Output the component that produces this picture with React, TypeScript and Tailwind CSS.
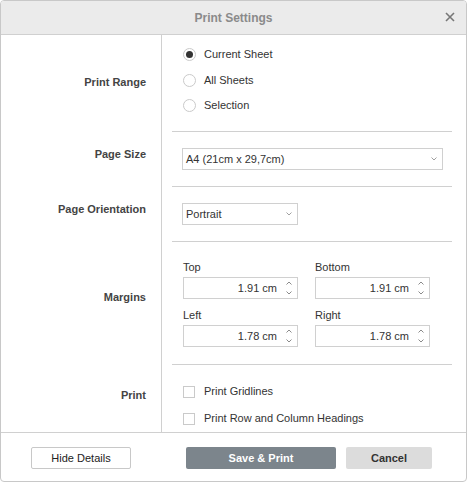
import type { ReactNode } from 'react'

const font = { fontFamily: '"Liberation Sans", Arial, sans-serif' }

function Chevron({ up = false, color = '#8a8a8a' }: { up?: boolean; color?: string }) {
  return (
    <svg width="6" height="4" viewBox="0 0 6 4" className="block">
      <polyline
        points={up ? '0.5,3.5 3,1 5.5,3.5' : '0.5,0.5 3,3 5.5,0.5'}
        fill="none"
        stroke={color}
        strokeWidth="1"
      />
    </svg>
  )
}

function Radio({ checked, label, tall }: { checked?: boolean; label: string; tall?: boolean }) {
  return (
    <div className={`flex ${tall ? 'h-[26px]' : 'h-[25px]'} items-center`}>
      <span className="ml-px flex h-[13px] w-[13px] items-center justify-center rounded-full border border-[#cacaca] bg-white">
        {checked && <span className="h-[7px] w-[7px] rounded-full bg-[#333]" />}
      </span>
      <span className="ml-[8px] text-[11px] text-[#333]">{label}</span>
    </div>
  )
}

function Checkbox({ label }: { label: string }) {
  return (
    <div className="flex h-[27px] items-center">
      <span className="ml-px h-[12px] w-[12px] border border-[#cacaca] bg-white" />
      <span className="ml-[9px] text-[11px] text-[#333]">{label}</span>
    </div>
  )
}

function Select({ value, width }: { value: string; width: string }) {
  return (
    <div className={`flex h-[22px] ${width} items-center justify-between border border-[#d0d0d0] bg-white pl-[3px] pr-[5px] text-[11px] text-[#333]`}>
      <span>{value}</span>
      <Chevron color="#a0a0a0" />
    </div>
  )
}

function NumberField({ label, value }: { label: string; value: string }) {
  return (
    <div className="flex flex-col">
      <span className="h-[14px] text-[11px] leading-[14px] text-[#333]">{label}</span>
      <div className="mt-[3px] flex h-[22px] w-[115px] items-center border border-[#d0d0d0] bg-white">
        <span className="flex-1 text-right text-[11px] text-[#333]">{value}</span>
        <span className="ml-[9px] mr-[5px] flex flex-col gap-[6px]">
          <Chevron up />
          <Chevron />
        </span>
      </div>
    </div>
  )
}

function Row({ label, labelPad, last, children }: { label: string; labelPad: string; last?: boolean; children: ReactNode }) {
  return (
    <div className={`flex ${last ? 'flex-1' : ''}`}>
      <div className={`flex w-[161px] shrink-0 items-center justify-end border-r border-[#d0d0d0] pr-[15px] ${labelPad}`}>
        <span className="text-[11px] font-bold text-[#444]">{label}</span>
      </div>
      <div className={`ml-[10px] mr-[14px] flex-1 ${last ? '' : 'border-b border-[#d0d0d0]'}`}>{children}</div>
    </div>
  )
}

export default function App() {
  return (
    <div className="h-[482px] w-[468px] bg-white" style={font}>
      <div className="flex h-[482px] w-[467px] flex-col overflow-hidden rounded-[4px] border border-[#c8c8c8] bg-white">
        <div className="relative flex h-[34px] shrink-0 items-center justify-center border-b border-[#d0d0d0] bg-[#ebebeb]">
          <span className="text-[12px] font-bold text-[#8a8a8a]">Print Settings</span>
          <svg width="10" height="10" viewBox="0 0 10 10" className="absolute right-[11px] top-[11px]">
            <path d="M1 1L9 9M9 1L1 9" stroke="#777" strokeWidth="1.6" />
          </svg>
        </div>

        <div className="flex min-h-0 flex-1 flex-col">
          <Row label="Print Range" labelPad="pb-[2px]">
            <div className="flex flex-col pb-[13px] pl-[10px] pt-[7px]">
              <Radio checked label="Current Sheet" />
              <Radio tall label="All Sheets" />
              <Radio label="Selection" />
            </div>
          </Row>

          <Row label="Page Size" labelPad="pb-[10px]">
            <div className="py-4 pl-[10px]">
              <Select value="A4 (21cm x 29,7cm)" width="w-[261px]" />
            </div>
          </Row>

          <Row label="Page Orientation" labelPad="pb-[10px]">
            <div className="py-4 pl-[10px]">
              <Select value="Portrait" width="w-[116px]" />
            </div>
          </Row>

          <Row label="Margins" labelPad="pb-[12px]">
            <div className="grid grid-cols-[115px_115px] gap-x-[17px] gap-y-[9px] pb-[17px] pl-[11px] pt-[18px]">
              <NumberField label="Top" value="1.91 cm" />
              <NumberField label="Bottom" value="1.91 cm" />
              <NumberField label="Left" value="1.78 cm" />
              <NumberField label="Right" value="1.78 cm" />
            </div>
          </Row>

          <Row label="Print" labelPad="pb-[7px]" last>
            <div className="flex flex-col pl-[10px] pt-[13px]">
              <Checkbox label="Print Gridlines" />
              <Checkbox label="Print Row and Column Headings" />
            </div>
          </Row>
        </div>

        <div className="flex h-[49px] shrink-0 items-start border-t border-[#d0d0d0] pt-[14px]">
          <button className="ml-[30px] h-[22px] w-[100px] rounded-[2px] border border-[#c8c8c8] bg-white text-[11px] text-[#222]">
            Hide Details
          </button>
          <button className="ml-[55px] h-[22px] w-[150px] rounded-[2px] bg-[#7c858c] text-[11px] font-bold text-white">
            Save &amp; Print
          </button>
          <button className="ml-[10px] h-[22px] w-[86px] rounded-[2px] bg-[#dcdcdc] text-[11px] font-bold text-[#333]">
            Cancel
          </button>
        </div>
      </div>
    </div>
  )
}
